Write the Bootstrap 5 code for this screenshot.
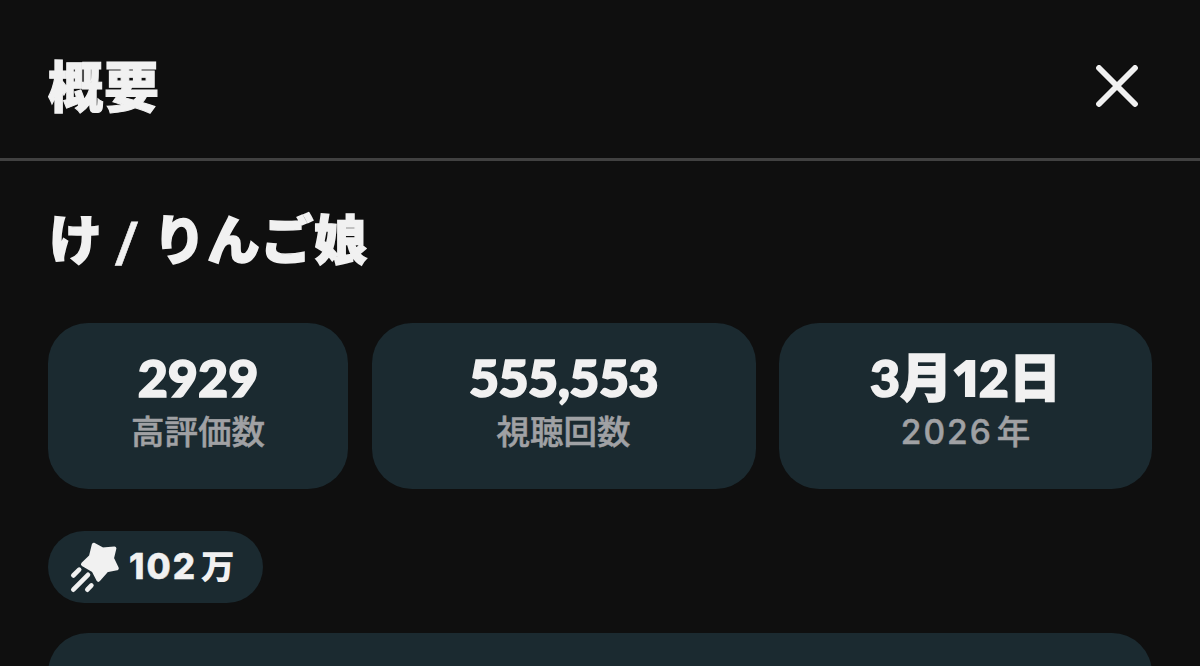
<!DOCTYPE html>
<html lang="ja">
<head>
    <meta charset="UTF-8">
    <meta name="viewport" content="width=device-width, initial-scale=1.0">
    <title>概要</title>
    <link href="https://cdn.jsdelivr.net/npm/bootstrap@5.3.0/dist/css/bootstrap.min.css" rel="stylesheet">
    <script src="https://cdn.jsdelivr.net/npm/bootstrap@5.3.0/dist/js/bootstrap.bundle.min.js"></script>
    <style>
        body {
            background: #0f0f0f;
            color: #f1f1f1;
            font-family: Inter, "Noto Sans CJK JP", sans-serif;
        }
        .panel-header {
            height: 161px;
            padding: 14px 62px 0 48px;
            border-bottom: 3px solid #414141;
        }
        .panel-title {
            font-size: 55px;
            font-weight: 900;
            line-height: 72px;
            padding-top: 2px;
            letter-spacing: 1px;
            -webkit-text-stroke: 1.1px currentColor;
        }
        .btn-dismiss {
            line-height: 0;
            color: inherit;
        }
        .panel-body {
            min-height: 0;
            padding: 40px 48px 0;
        }
        .video-title {
            height: 72px;
            font-family: "Noto Sans CJK JP", sans-serif;
            font-size: 53px;
            font-weight: 900;
            line-height: 72px;
            padding-left: 1px;
            margin-bottom: 50px;
            letter-spacing: 0.8px;
            -webkit-text-stroke: 1.5px currentColor;
        }
        .slash {
            display: inline-block;
            font-family: Inter, sans-serif;
            font-size: 50px;
            font-weight: 700;
            line-height: 1;
            margin: 0 3px 0 1px;
            transform: skewX(-6deg);
            -webkit-text-stroke: 0.6px currentColor;
        }
        .stats {
            display: grid;
            grid-template-columns: 300px 384px 373px;
            column-gap: 23.5px;
        }
        .tile {
            background: #1b2a30;
            border-radius: 40px;
        }
        .stat {
            height: 166px;
            padding-top: 25px;
        }
        .stat-value {
            height: 58px;
            font-family: Lato, "Noto Sans CJK JP", sans-serif;
            font-size: 52px;
            font-weight: 900;
            line-height: 58px;
            -webkit-text-stroke: 1.6px currentColor;
        }
        .stat-value.views {
            letter-spacing: -0.6px;
        }
        /* plain 1 without the foot */
        .narrow-one {
            font-family: "Open Sans", sans-serif;
            font-weight: 800;
            line-height: 1;
            margin: 0 -3px 0 -1px;
            -webkit-text-stroke: 0;
        }
        .stat-label {
            font-size: 33.5px;
            font-weight: 500;
            line-height: 46px;
            margin-top: 3px;
            color: #a0a1a4;
            -webkit-text-stroke: 0.5px currentColor;
        }
        .spaced {
            letter-spacing: 2px;
        }
        .artist-chip {
            width: 215px;
            height: 72px;
            margin-top: 42px;
            padding-left: 21px;
            font-size: 35px;
            font-weight: 800;
            line-height: 70px;
            -webkit-text-stroke: 0.5px currentColor;
        }
        .chip-text {
            padding-bottom: 2px;
        }
        .unit {
            margin-left: 4px;
            font-size: 33.5px;
        }
        .artist-chip .unit {
            -webkit-text-stroke: 0;
        }
        .description {
            height: 120px;
            margin-top: 30px;
        }
    </style>
</head>
<body class="vh-100 overflow-hidden d-flex flex-column">
    <header class="panel-header flex-shrink-0 d-flex align-items-center justify-content-between">
        <h1 class="panel-title m-0">概要</h1>
        <button type="button" class="btn btn-dismiss p-0 border-0" aria-label="閉じる">
            <svg width="42" height="42" viewBox="0 0 42 42" fill="none" stroke="currentColor" stroke-width="5.8" stroke-linecap="round">
                <path d="M3 3 39 39M39 3 3 39"/>
            </svg>
        </button>
    </header>

    <main class="panel-body flex-fill overflow-hidden">
        <h2 class="video-title">け <span class="slash">/</span> りんご娘</h2>

        <div class="stats text-center">
            <div class="tile stat">
                <div class="stat-value">2929</div>
                <div class="stat-label">高評価数</div>
            </div>
            <div class="tile stat">
                <div class="stat-value views">555,553</div>
                <div class="stat-label">視聴回数</div>
            </div>
            <div class="tile stat">
                <div class="stat-value">3月<span class="narrow-one">1</span>2日</div>
                <div class="stat-label"><span class="spaced">2026</span><span class="unit">年</span></div>
            </div>
        </div>

        <div class="artist-chip tile d-flex align-items-center">
            <!-- shooting star -->
            <svg class="flex-shrink-0" width="52" height="52" viewBox="0 0 52 52" fill="currentColor" stroke="currentColor" stroke-linecap="round" stroke-linejoin="round">
                <path stroke-width="4" d="M24.8 3.8 33.6 8.6 45.4 7.4 43 17.3 47.8 27.4 37.6 29.4 29.4 38.8 24.6 29.6 14 23.2 22 15.3Z"/>
                <path fill="none" stroke-width="4.6" d="M4.3 34.5 10.2 28.7M4.3 48.7 19 33.8M18.3 48.7 22.4 44.4"/>
            </svg>
            <span class="chip-text ms-2"><span class="spaced">102</span><span class="unit">万</span></span>
        </div>

        <div class="description tile"></div>
    </main>
</body>
</html>
